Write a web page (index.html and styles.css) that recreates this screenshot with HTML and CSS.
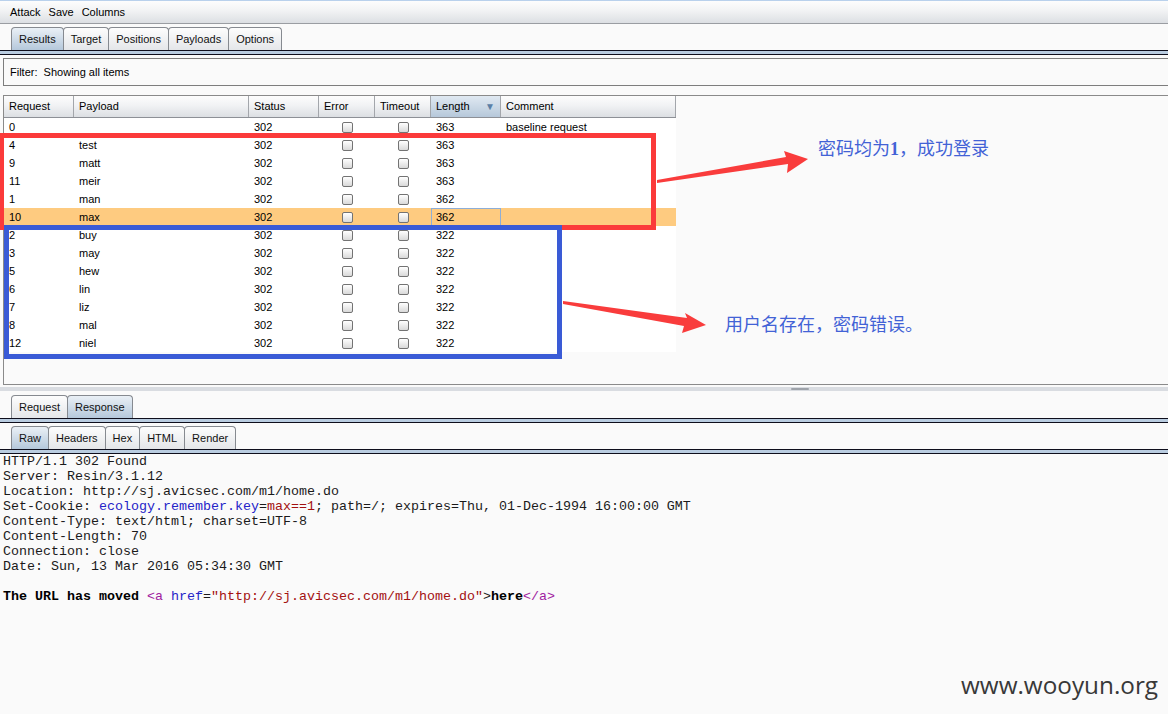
FILE: index.html
```html
<!DOCTYPE html>
<html>
<head>
<meta charset="utf-8">
<link rel="stylesheet" href="styles.css">
</head>
<body>
<div class="topline"></div>
<div class="menubar"><span>Attack</span><span>Save</span><span>Columns</span></div>

<div class="tabs main-tabs">
  <div class="tab sel">Results</div>
  <div class="tab">Target</div>
  <div class="tab">Positions</div>
  <div class="tab">Payloads</div>
  <div class="tab">Options</div>
</div>
<div class="rule"></div>

<div class="filter">Filter:&nbsp; Showing all items</div>

<div class="results">
  <div class="grid">
    <div class="thead">
      <div class="th c-req">Request</div>
      <div class="th c-pay">Payload</div>
      <div class="th c-st">Status</div>
      <div class="th c-err">Error</div>
      <div class="th c-to">Timeout</div>
      <div class="th c-len sorted"><span>Length</span><span class="arrow">▼</span></div>
      <div class="th c-com">Comment</div>
    </div>
    <div class="row"><div class="td c-req">0</div><div class="td c-pay"></div><div class="td c-st">302</div><div class="td c-err"><i class="cb"></i></div><div class="td c-to"><i class="cb"></i></div><div class="td c-len">363</div><div class="td c-com">baseline request</div></div>
    <div class="row"><div class="td c-req">4</div><div class="td c-pay">test</div><div class="td c-st">302</div><div class="td c-err"><i class="cb"></i></div><div class="td c-to"><i class="cb"></i></div><div class="td c-len">363</div><div class="td c-com"></div></div>
    <div class="row"><div class="td c-req">9</div><div class="td c-pay">matt</div><div class="td c-st">302</div><div class="td c-err"><i class="cb"></i></div><div class="td c-to"><i class="cb"></i></div><div class="td c-len">363</div><div class="td c-com"></div></div>
    <div class="row"><div class="td c-req">11</div><div class="td c-pay">meir</div><div class="td c-st">302</div><div class="td c-err"><i class="cb"></i></div><div class="td c-to"><i class="cb"></i></div><div class="td c-len">363</div><div class="td c-com"></div></div>
    <div class="row"><div class="td c-req">1</div><div class="td c-pay">man</div><div class="td c-st">302</div><div class="td c-err"><i class="cb"></i></div><div class="td c-to"><i class="cb"></i></div><div class="td c-len">362</div><div class="td c-com"></div></div>
    <div class="row selected"><div class="td c-req">10</div><div class="td c-pay">max</div><div class="td c-st">302</div><div class="td c-err"><i class="cb"></i></div><div class="td c-to"><i class="cb"></i></div><div class="td c-len focus">362</div><div class="td c-com"></div></div>
    <div class="row"><div class="td c-req">2</div><div class="td c-pay">buy</div><div class="td c-st">302</div><div class="td c-err"><i class="cb"></i></div><div class="td c-to"><i class="cb"></i></div><div class="td c-len">322</div><div class="td c-com"></div></div>
    <div class="row"><div class="td c-req">3</div><div class="td c-pay">may</div><div class="td c-st">302</div><div class="td c-err"><i class="cb"></i></div><div class="td c-to"><i class="cb"></i></div><div class="td c-len">322</div><div class="td c-com"></div></div>
    <div class="row"><div class="td c-req">5</div><div class="td c-pay">hew</div><div class="td c-st">302</div><div class="td c-err"><i class="cb"></i></div><div class="td c-to"><i class="cb"></i></div><div class="td c-len">322</div><div class="td c-com"></div></div>
    <div class="row"><div class="td c-req">6</div><div class="td c-pay">lin</div><div class="td c-st">302</div><div class="td c-err"><i class="cb"></i></div><div class="td c-to"><i class="cb"></i></div><div class="td c-len">322</div><div class="td c-com"></div></div>
    <div class="row"><div class="td c-req">7</div><div class="td c-pay">liz</div><div class="td c-st">302</div><div class="td c-err"><i class="cb"></i></div><div class="td c-to"><i class="cb"></i></div><div class="td c-len">322</div><div class="td c-com"></div></div>
    <div class="row"><div class="td c-req">8</div><div class="td c-pay">mal</div><div class="td c-st">302</div><div class="td c-err"><i class="cb"></i></div><div class="td c-to"><i class="cb"></i></div><div class="td c-len">322</div><div class="td c-com"></div></div>
    <div class="row"><div class="td c-req">12</div><div class="td c-pay">niel</div><div class="td c-st">302</div><div class="td c-err"><i class="cb"></i></div><div class="td c-to"><i class="cb"></i></div><div class="td c-len">322</div><div class="td c-com"></div></div>
  </div>
</div>

<div class="splitter"><div class="band"><div class="grip"></div></div></div>

<div class="tabs lower-tabs">
  <div class="tab">Request</div>
  <div class="tab sel">Response</div>
</div>
<div class="rule"></div>

<div class="tabs main-tabs">
  <div class="tab sel">Raw</div>
  <div class="tab">Headers</div>
  <div class="tab">Hex</div>
  <div class="tab">HTML</div>
  <div class="tab">Render</div>
</div>
<div class="rule"></div>

<pre class="resp">HTTP/1.1 302 Found
Server: Resin/3.1.12
Location: http://sj.avicsec.com/m1/home.do
Set-Cookie: <span class="k">ecology.remember.key</span>=<span class="v">max==1</span>; path=/; expires=Thu, 01-Dec-1994 16:00:00 GMT
Content-Type: text/html; charset=UTF-8
Content-Length: 70
Connection: close
Date: Sun, 13 Mar 2016 05:34:30 GMT

<b>The URL has moved</b> <span class="tag">&lt;a</span> <span class="k">href</span>=<span class="v">"http://sj.avicsec.com/m1/home.do"</span>&gt;<b>here</b><span class="tag">&lt;/a&gt;</span></pre>

<svg class="annot" width="1168" height="714" viewBox="0 0 1168 714">
  <rect x="1.5" y="135.5" width="652" height="92" fill="none" stroke="#fb3a3a" stroke-width="5"/>
  <rect x="6.5" y="227.5" width="553" height="129" fill="none" stroke="#3a5bd6" stroke-width="5"/>
  <polygon fill="#f93c3c" points="657,180 786,157 784,151 808,159 787,173 788,164 657,183"/>
  <polygon fill="#f93c3c" points="563,301 687,318 685,313 706,325 682,333 684,326 563,304"/>
</svg>
<div class="note note1">密码均为<b>1</b>，成功登录</div>
<div class="note note2">用户名存在，密码错误。</div>
<div class="watermark">www.wooyun.org</div>
</body>
</html>
```
FILE: styles.css
```css
html, body {
  margin: 0;
  padding: 0;
}
body {
  width: 1168px;
  height: 714px;
  overflow: hidden;
  position: relative;
  background: #fafafa;
  font-family: "Liberation Sans", Arial, sans-serif;
  font-size: 11px;
  color: #000;
}

.topline {
  height: 1px;
  background: #b9d1ec;
}
.menubar {
  height: 22px;
  border-bottom: 1px solid #9a9da2;
  background: linear-gradient(#fdfdfd, #f3f4f5 40%, #dcdfe3);
  display: flex;
  align-items: center;
  gap: 8px;
  padding-left: 10px;
  font-size: 11px;
}

.tabs {
  display: flex;
  height: 23px;
  padding-left: 11px;
  margin-top: 3px;
}
.lower-tabs {
  margin-top: 0;
}
.tab {
  display: flex;
  align-items: center;
  padding: 0 7px;
  border: 1px solid #868a90;
  border-bottom: none;
  border-radius: 4px 4px 0 0;
  background: linear-gradient(#fdfdfd, #e4e6e9);
  margin-right: -1px;
  font-size: 11px;
  color: #111;
}
.tab.sel {
  background: linear-gradient(#eaf0f6, #b5c8db);
}
.rule {
  height: 3px;
  border-top: 1px solid #0e0e1c;
  border-bottom: 1px solid #0e0e1c;
  background: #b9cce0;
}

.filter {
  margin: 3px 0 0 3px;
  height: 26px;
  border: 1px solid #7d7d7d;
  border-right: none;
  display: flex;
  align-items: center;
  padding-left: 6px;
}

.results {
  margin: 9px 0 0 3px;
  height: 288px;
  border: 1px solid #8a8a8a;
  border-right: none;
}
.grid {
  width: 672px;
  background: #fff;
}
.thead {
  display: flex;
  height: 22px;
  box-sizing: border-box;
  border-bottom: 1px solid #8d9096;
  background: linear-gradient(#fdfdfd, #f1f2f4 45%, #dcdfe3);
}
.th {
  display: flex;
  align-items: center;
  box-sizing: border-box;
  padding-left: 5px;
  padding-bottom: 1px;
  border-right: 1px solid #a3a6ab;
}
.th.sorted {
  justify-content: space-between;
  padding-right: 5px;
  background: linear-gradient(#e0e9f2, #b6c8da);
}
.arrow {
  color: #5b7fa6;
  font-size: 10px;
}
.c-req { width: 70px; }
.c-pay { width: 175px; }
.c-st  { width: 70px; }
.c-err { width: 56px; }
.c-to  { width: 56px; }
.c-len { width: 70px; }
.c-com { width: 175px; }

.row {
  display: flex;
  height: 18px;
}
.td {
  display: flex;
  align-items: center;
  box-sizing: border-box;
  padding-left: 5px;
}
.td.c-err, .td.c-to {
  justify-content: center;
  padding-left: 0;
}
.row.selected {
  background: #fecb80;
}
.td.focus {
  border: 1px solid #8eaed6;
  padding-left: 4px;
}
.cb {
  display: block;
  width: 11px;
  height: 11px;
  box-sizing: border-box;
  border: 1px solid #737373;
  border-radius: 2px;
  background: linear-gradient(#ffffff, #d9d9d9);
}

.splitter {
  height: 10px;
  padding-top: 2px;
  box-sizing: border-box;
}
.band {
  height: 4px;
  background: #d9dce1;
  padding-top: 1px;
  box-sizing: border-box;
}
.grip {
  margin-left: 791px;
  width: 18px;
  height: 2px;
  border-radius: 1px;
  background: #9ea3aa;
}

.resp {
  margin: 0;
  padding: 0 0 0 3px;
  font-family: "Liberation Mono", "Courier New", monospace;
  font-size: 13.33px;
  line-height: 15px;
  color: #1a1a1a;
}
.resp b {
  color: #000;
}
.resp .k {
  color: #2424c8;
}
.resp .v {
  color: #a31010;
}
.resp .tag {
  color: #a01ca0;
}

.annot {
  position: absolute;
  left: 0;
  top: 0;
  pointer-events: none;
}
.note {
  position: absolute;
  font-family: "Noto Sans CJK SC", "Liberation Sans", sans-serif;
  font-size: 18px;
  line-height: 20px;
  color: #4262d6;
  white-space: nowrap;
}
.note b {
  font-family: "Liberation Serif", serif;
  font-weight: bold;
}
.note1 {
  left: 818px;
  top: 137px;
}
.note2 {
  left: 725px;
  top: 313px;
}
.watermark {
  position: absolute;
  left: 961px;
  top: 670px;
  font-family: "Open Sans", "Noto Sans", sans-serif;
  font-size: 24.3px;
  line-height: 30px;
  color: #383838;
}
```
